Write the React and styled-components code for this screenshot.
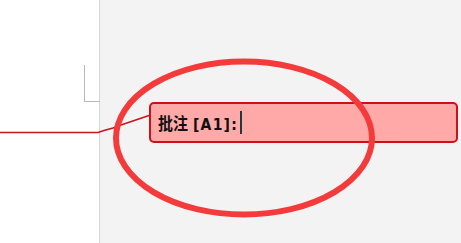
import React from "react";
import styled, { createGlobalStyle } from "styled-components";

const Global = createGlobalStyle`
  html, body { margin: 0; padding: 0; }
  body { width: 461px; height: 243px; overflow: hidden; background: #f3f3f3; }
  #root { width: 461px; height: 243px; }
`;

const Stage = styled.div`
  position: relative;
  display: flex;
  width: 461px;
  height: 243px;
  overflow: hidden;
`;

const Page = styled.div`
  flex: none;
  width: 100px;
  box-sizing: border-box;
  background: #ffffff;
  border-right: 1px solid #d6d6d6;
  padding-top: 65px;
  padding-left: 84px;
`;

const CornerMark = styled.div`
  width: 15px;
  height: 36px;
  border-left: 1px solid #b8b8b8;
  border-bottom: 1px solid #b8b8b8;
`;

const Margin = styled.div`
  flex: 1;
  background: #f3f3f3;
  padding-top: 102px;
  padding-left: 49px;
`;

const Balloon = styled.div`
  width: 309px;
  height: 41px;
  box-sizing: border-box;
  border: 2px solid #cc1119;
  border-radius: 5px;
  background: #ffa9a9;
  display: flex;
  align-items: center;
  padding-left: 7px;
`;

const Label = styled.span`
  display: inline-flex;
  align-items: baseline;
  transform: scaleY(1.15);
  font-weight: 700;
  color: #111;
  white-space: pre;
`;

const Han = styled.span`
  font-family: "Noto Sans CJK SC", sans-serif;
  font-size: 15px;
`;

const Ref = styled.span`
  font-family: "DejaVu Sans", sans-serif;
  font-size: 14px;
  letter-spacing: 1.2px;
  margin-left: 5px;
`;

const Caret = styled.span`
  display: inline-block;
  width: 2px;
  height: 23px;
  background: #23383a;
  margin-left: 2px;
`;

const Overlay = styled.svg`
  position: absolute;
  left: 0;
  top: 0;
  pointer-events: none;
`;

export default function App() {
  return (
    <>
      <Global />
      <Stage>
        <Page>
          <CornerMark />
        </Page>
        <Margin>
          <Balloon>
            <Label>
              <Han>批注</Han>
              <Ref>[A1]:</Ref>
            </Label>
            <Caret />
          </Balloon>
        </Margin>
        <Overlay width="461" height="243" viewBox="0 0 461 243">
          <polyline
            points="0,132.5 98,132.5 104,130.5 113,128 121,125 149,115.5"
            fill="none"
            stroke="#c8141c"
            strokeWidth="1.6"
          />
          <ellipse
            cx="244"
            cy="138"
            rx="128"
            ry="76.5"
            fill="none"
            stroke="#f43b3b"
            strokeWidth="6"
          />
        </Overlay>
      </Stage>
    </>
  );
}
